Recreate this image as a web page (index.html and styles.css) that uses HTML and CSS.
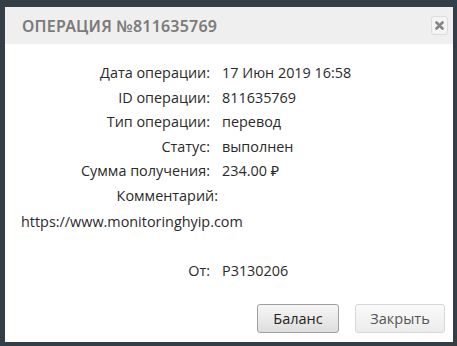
FILE: index.html
```html
<!DOCTYPE html>
<html lang="ru">

<head>
    <meta charset="UTF-8">
    <meta name="viewport" content="width=device-width, initial-scale=1.0">
    <title>Операция №811635769</title>
    <link rel="stylesheet" href="styles.css">
</head>

<body>
    <div class="dialog">
        <div class="dialog-head">
            <span class="dialog-title">Операция №811635769</span>
            <button class="close-btn" type="button" title="Закрыть">
                <svg width="9" height="9" viewBox="0 0 9 9">
                    <path d="M1.5 1.5 L7.5 7.5 M7.5 1.5 L1.5 7.5" stroke="#858585" stroke-width="2.6" stroke-linecap="round" />
                </svg>
            </button>
        </div>
        <div class="dialog-body">
            <div class="info">
                <span class="label">Дата операции:</span>
                <span class="value">17 Июн 2019 16:58</span>
                <span class="label">ID операции:</span>
                <span class="value">811635769</span>
                <span class="label">Тип операции:</span>
                <span class="value">перевод</span>
                <span class="label">Статус:</span>
                <span class="value">выполнен</span>
                <span class="label">Сумма получения:</span>
                <span class="value">234.00 ₽</span>
                <span class="label comment-label">Комментарий:</span>
                <span class="value"></span>
            </div>
            <p class="comment">https://www.monitoringhyip.com</p>
            <div class="info from">
                <span class="label">От:</span>
                <span class="value">P3130206</span>
            </div>
        </div>
        <div class="dialog-foot">
            <button class="btn btn-main" type="button">Баланс</button>
            <button class="btn btn-close" type="button">Закрыть</button>
        </div>
    </div>
</body>

</html>
```

FILE: styles.css
```css
body {
    margin: 0;
    background-color: #333e47;
    font-family: "Open Sans", "Noto Sans", sans-serif;
}

.dialog {
    width: 448px;
    margin: 7px 0 3px 5px;
    background: #fff;
}

.dialog-head {
    display: flex;
    align-items: center;
    justify-content: space-between;
    height: 37px;
    padding: 0 5px 0 17px;
    background: #efefef;
}

.dialog-title {
    font-family: "Noto Sans", sans-serif;
    font-weight: 600;
    font-size: 16px;
    letter-spacing: 0.2px;
    text-transform: uppercase;
    color: #7b7b7b;
}

.close-btn {
    display: flex;
    align-items: center;
    justify-content: center;
    width: 17px;
    height: 19px;
    padding: 0;
    border: 1px solid #dcdcdc;
    border-radius: 3px;
    background: #f4f4f4;
}

.dialog-body {
    padding-top: 17px;
    font-size: 14.4px;
    color: #2a2a2a;
}

.info {
    display: grid;
    grid-template-columns: 205px auto;
    column-gap: 12px;
    line-height: 24.6px;
}

.label {
    text-align: right;
}

.comment-label {
    margin-right: -8px;
}

.comment {
    margin: 0;
    padding-left: 16px;
    line-height: 26px;
}

.from {
    margin-top: 24px;
}

.dialog-foot {
    display: flex;
    justify-content: flex-end;
    gap: 16px;
    padding: 21px 8px 9px 0;
}

.btn {
    height: 29px;
    padding: 0;
    border-radius: 3px;
    font-family: "Open Sans", sans-serif;
    font-size: 14.5px;
}

.btn-main {
    width: 82px;
    border: 1px solid #a0a0a0;
    background: linear-gradient(#f6f6f6, #dedede);
    color: #222;
}

.btn-close {
    width: 90px;
    border: 1px solid #d6d6d6;
    background: linear-gradient(#fafafa, #ececec);
    color: #555;
}
```
